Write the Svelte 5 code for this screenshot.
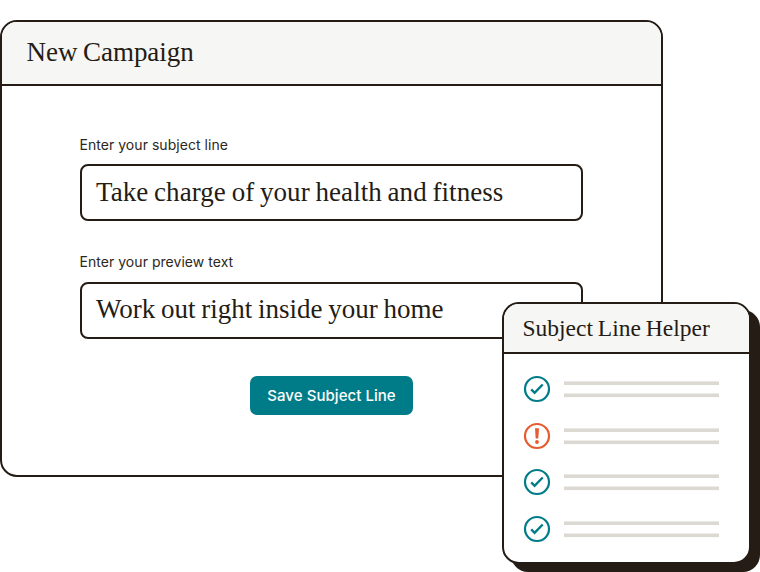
<script>
  const fields = [
    { label: 'Enter your subject line', value: 'Take charge of your health and fitness', kind: 'subject' },
    { label: 'Enter your preview text', value: 'Work out right inside your home', kind: 'preview' }
  ];
  const checks = [true, false, true, true];
</script>

<div class="stage">
  <section class="window">
    <header class="title">New Campaign</header>
    <div class="form">
      {#each fields as field}
        <div class="field {field.kind}">
          <div class="label">{field.label}</div>
          <div class="input"><span>{field.value}</span></div>
        </div>
      {/each}
      <button>Save Subject Line</button>
    </div>
  </section>

  <aside class="helper">
    <header>Subject Line Helper</header>
    <ul>
      {#each checks as ok}
        <li>
          <svg class:warn={!ok} width="28" height="28" viewBox="0 0 28 28" fill="none" stroke="currentColor">
            <circle cx="14" cy="14" r="12" stroke-width="2.2" />
            {#if ok}
              <path d="M8.2 14.4 L11.6 17.8 L19.7 9.5" stroke-width="2.4" />
            {:else}
              <path d="M12 6.2 H16 L15.3 16.6 H12.7 Z" fill="currentColor" stroke="none" />
              <circle cx="14" cy="20" r="1.9" fill="currentColor" stroke="none" />
            {/if}
          </svg>
          <svg class="lines" width="155" height="28" viewBox="0 0 155 28" fill="currentColor">
            <rect y="6.4" width="155" height="3.6" />
            <rect y="18.5" width="155" height="3.6" />
          </svg>
        </li>
      {/each}
    </ul>
  </aside>
</div>

<style>
  :global(body) {
    background: #fff;
  }
  .stage {
    position: relative;
    box-sizing: border-box;
    width: 760px;
    height: 572px;
    padding-top: 20px;
    overflow: hidden;
    color: #241c15;
  }
  .window {
    box-sizing: border-box;
    width: 663px;
    height: 457px;
    border: 2px solid #241c15;
    border-radius: 17px;
    overflow: hidden;
    background: #fff;
  }
  .title {
    box-sizing: border-box;
    height: 64px;
    padding-left: 24.5px;
    border-bottom: 2px solid #241c15;
    background: #f6f6f4;
    font: 27px/61px 'Liberation Serif', serif;
    letter-spacing: -0.05px;
    word-spacing: -1px;
  }
  .form {
    display: flex;
    flex-direction: column;
    padding: 49px 0 0 77.5px;
  }
  .field {
    width: 503.5px;
    margin-bottom: 31px;
  }
  .label {
    height: 20px;
    margin-bottom: 9.3px;
    font: 14px/20px Inter, sans-serif;
    letter-spacing: 0.04px;
    color: #2c2722;
    white-space: nowrap;
  }
  .input {
    box-sizing: border-box;
    height: 57px;
    padding-left: 14.5px;
    border: 2px solid #241c15;
    border-radius: 8px;
    font: 27px/52px 'Liberation Serif', serif;
    letter-spacing: 0.05px;
    word-spacing: -1px;
    white-space: nowrap;
  }
  .preview .input {
    line-height: 51px;
    letter-spacing: 0;
  }
  button {
    width: 163px;
    height: 39px;
    margin: 6px 0 0 170.5px;
    padding: 0;
    border: 0;
    border-radius: 7px;
    background: #007c89;
    color: #fff;
    font: 500 15px/39px Inter, sans-serif;
    letter-spacing: 0.05px;
  }
  .helper {
    position: absolute;
    left: 502px;
    top: 302px;
    box-sizing: border-box;
    width: 249px;
    height: 262px;
    border: 2px solid #241c15;
    border-radius: 17px;
    background: #fff;
    box-shadow: 9px 8px 0 #241c15;
  }
  .helper header {
    box-sizing: border-box;
    height: 50px;
    padding-left: 18.5px;
    border-bottom: 2px solid #241c15;
    border-radius: 15px 15px 0 0;
    background: #f6f6f4;
    font: 23.5px/49px 'Liberation Serif', serif;
    word-spacing: -1px;
  }
  ul {
    display: flex;
    flex-direction: column;
    gap: 18.67px;
    margin: 0;
    padding: 21px 0 0 19px;
    list-style: none;
  }
  li {
    display: flex;
    align-items: center;
    gap: 13px;
    height: 28px;
  }
  svg {
    display: block;
    flex: none;
    color: #007c89;
  }
  .warn {
    color: #e55c30;
  }
  .lines {
    color: #dbd9d2;
  }
</style>
